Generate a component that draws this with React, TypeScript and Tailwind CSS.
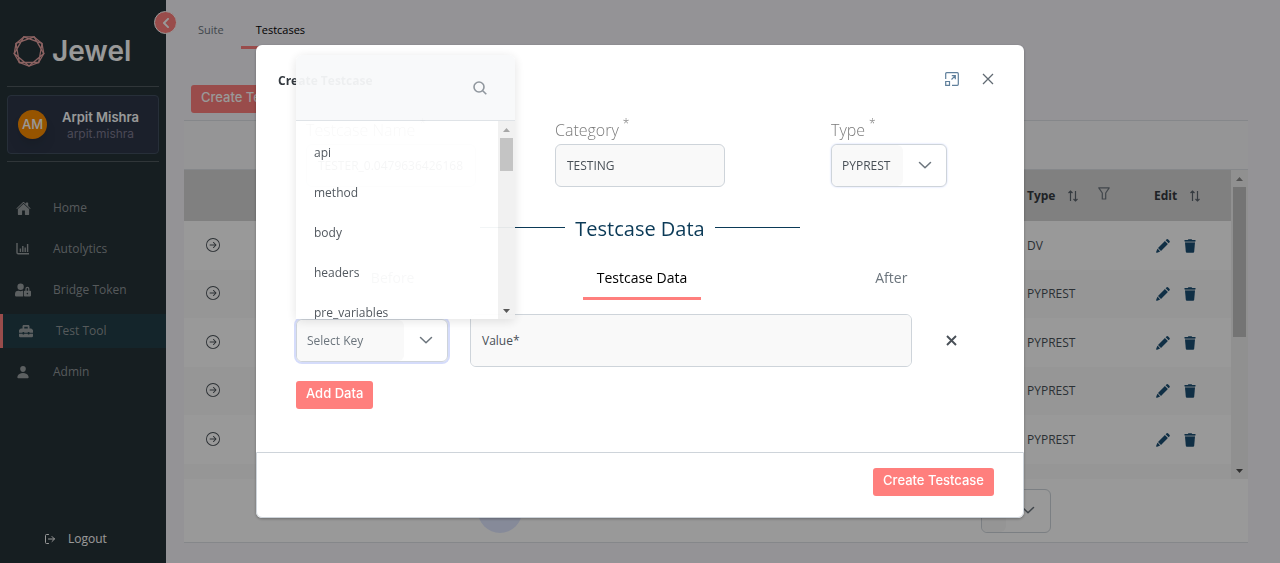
import React from "react";
import { FaUserLock, FaToolbox, FaChevronLeft } from "react-icons/fa";
import { IoPerson, IoHome } from "react-icons/io5";
import { FiLogOut } from "react-icons/fi";
import { BsArrowRightCircle } from "react-icons/bs";

const sans = "font-['Open_Sans','Noto_Sans',sans-serif]";
const round = "font-['Inter',sans-serif]";

function JewelLogo() {
  const n = 9;
  const pts = Array.from({ length: n }, (_, i) => {
    const a = ((i * 360) / n - 70) * (Math.PI / 180);
    return [16 + 15 * Math.cos(a), 16 + 15 * Math.sin(a)];
  });
  const path = (step: number) =>
    pts.map((_, i) => pts[(i * step) % n].map((v) => v.toFixed(2)).join(",")).join(" ");
  return (
    <svg viewBox="0 0 32 32" className="size-8 shrink-0" fill="none" stroke="#e8a3a2" strokeWidth="1.3" aria-hidden="true">
      <polygon points={path(1)} />
      <polygon points={path(2)} />
    </svg>
  );
}

function ChartIcon() {
  return (
    <svg viewBox="0 0 14 12" className="h-3 w-3.5" fill="none" stroke="currentColor" aria-hidden="true">
      <path d="M1 0v9.5q0 1.2 1.2 1.2H13" strokeWidth="1.4" />
      <path d="M4.4 9V5.5M6.8 9V3M9.2 9V4.5M11.6 9V1" strokeWidth="1.4" />
    </svg>
  );
}

function SortIcon() {
  return (
    <svg viewBox="0 0 12 12" className="size-3" fill="none" stroke="#5b646d" strokeWidth="1.2" aria-hidden="true">
      <path d="M3.5 11V1M1.500 3 3.5 1l2 2M8.500 1v10M6.500 9l2 2 2-2" />
    </svg>
  );
}

function FilterIcon() {
  return (
    <svg viewBox="0 0 12 13" className="h-[13px] w-3" fill="none" stroke="#6c757d" strokeWidth="1.2" aria-hidden="true">
      <path d="M.8.8h10.4L7.7 6v6H4.3V6z" strokeLinejoin="round" />
    </svg>
  );
}

function PencilIcon() {
  return (
    <svg viewBox="0 0 14 14" className="size-3.5" fill="#1c4f73" aria-hidden="true">
      <path d="M9.6 1.3 12.6 4.3 13.4 3.5a1.3 1.3 0 0 0 0-1.8L12.2.5a1.3 1.3 0 0 0-1.8 0z" />
      <path d="M8.9 2 11.9 5 5 11.9 2 8.9z" />
      <path d="M1.5 9.6.2 12.8q-.3 1.2 1 .9l3.1-1.2-.9-.6-.3-1.1-1-.2z" />
    </svg>
  );
}

function TrashIcon() {
  return (
    <svg viewBox="0 0 12 14" className="h-3.5 w-3" fill="#1c4f73" aria-hidden="true">
      <path d="M.5 1h3.3L4.4.3h3.2l.6.7h3.3v1.4H.5z" />
      <path d="M1 3.4h10l-.8 9.3q-.1 1-1.1 1H2.9q-1 0-1.1-1z" />
      <path d="M1 2.4h10v1H1z" opacity=".5" />
    </svg>
  );
}

function Chevron() {
  return (
    <svg viewBox="0 0 14 14" className="size-3.5" fill="none" stroke="#6c757d" strokeWidth="1.5" aria-hidden="true">
      <path d="M1.500 3.500 7 8.800l5.500-5.300" strokeLinecap="round" strokeLinejoin="round" />
    </svg>
  );
}

function Scrollbar({ thumb, dim }: { thumb: string; dim?: boolean }) {
  return (
    <div className="flex w-[17px] shrink-0 flex-col items-center bg-[#f1f1f1]" aria-hidden="true">
      <svg viewBox="0 0 17 17" className="size-[17px]" fill={dim ? "#8b8b8b" : "#a3a3a3"}>
        <path d="M5 11h7L8.500 7z" />
      </svg>
      <div className={`w-[13px] bg-[#c1c1c1] ${thumb}`} />
      <svg viewBox="0 0 17 17" className="mt-auto size-[17px]" fill="#505050">
        <path d="M5 7h7l-3.500 4z" />
      </svg>
    </div>
  );
}

const navItems = [
  { label: "Home", icon: <IoHome size={15} /> },
  { label: "Autolytics", icon: <ChartIcon /> },
  { label: "Bridge Token", icon: <FaUserLock size={16} /> },
  { label: "Test Tool", icon: <FaToolbox size={14} />, active: true },
  { label: "Admin", icon: <IoPerson size={14} /> },
];

function Sidebar() {
  return (
    <aside className="relative flex w-[166px] shrink-0 flex-col bg-[#263238]">
      <button
        aria-label="Collapse menu"
        className="absolute top-[11px] -right-[11px] flex size-[23px] items-center justify-center rounded-full border border-white bg-[#ff7f7d] text-white"
      >
        <FaChevronLeft size={12} />
      </button>
      <div className="flex flex-col px-[7px]">
        <div className={`flex h-[86px] items-center gap-[7px] pt-4 pl-1.5 ${round}`}>
          <JewelLogo />
          <span className="text-[28px] font-semibold text-white">Jewel</span>
        </div>
        <hr className="border-[#515b60]" />
        <div className={`mt-2 mb-[7px] flex h-[59px] items-center rounded-sm border border-[#414f60] bg-[#2d3648] pr-1 pl-2.5 ${round}`}>
          <div className="flex size-[29px] items-center justify-center rounded-full bg-[#fb8c00] text-[13px] font-medium text-white shadow-lg">
            AM
          </div>
          <div className="flex flex-1 flex-col items-center leading-[18px]">
            <span className="text-[13px] font-semibold text-white">Arpit Mishra</span>
            <span className="text-xs text-[#7d7b91]">arpit.mishra</span>
          </div>
        </div>
        <hr className="border-[#515b60]" />
      </div>
      <nav className="mt-[29px] flex flex-col gap-[7px]">
        {navItems.map((item) => (
          <a
            key={item.label}
            href="#"
            className={`flex h-[34px] items-center text-xs text-[#8f9698] ${
              item.active ? "border-l-[3px] border-[#ff7f7d] bg-[#223e48]" : ""
            }`}
          >
            <span className="ml-3.5 flex w-[18px] justify-center text-[#9aa0a2]">{item.icon}</span>
            <span className="ml-[21px]">{item.label}</span>
          </a>
        ))}
      </nav>
      <button className="mt-auto flex h-12 items-center gap-3 pl-11 text-xs text-white">
        <FiLogOut size={12} />
        Logout
      </button>
    </aside>
  );
}

const rows = ["DV", "PYPREST", "PYPREST", "PYPREST", "PYPREST", ""];

function TestcasePage() {
  return (
    <main className="flex min-w-0 flex-1 flex-col bg-[#f7f5fb] pr-8 pl-[18px]">
      <div className="flex h-[49px] text-[11px] font-medium" role="tablist">
        <button role="tab" aria-selected={false} className="px-3.5 pt-3.5 pb-0.5 text-[#6c757d]">
          Suite
        </button>
        <button role="tab" aria-selected className="ml-[3px] border-b-[3px] border-[#ff7f7d] px-[15px] pt-[15px] text-black">
          Testcases
        </button>
      </div>
      <div className="flex pt-9 pb-[7px] pl-[7px]">
        <button className={`h-7 rounded-[3px] bg-[#ff7f7d] px-2.5 pb-0.5 text-[13px] font-medium text-white ${round}`}>
          Create Testcase
        </button>
      </div>
      <section className="border-y border-[#dee2e6] bg-white">
        <div className="h-[49px] border-b border-[#dee2e6] bg-[#f8f9fa]" />
        <div className="flex h-[309px] overflow-hidden">
          <table className="w-full flex-1 table-fixed self-start text-left text-xs text-[#495057]">
            <colgroup>
              <col />
              <col className="w-[127px]" />
              <col className="w-[77px]" />
            </colgroup>
            <thead>
              <tr className="h-[51px] bg-[#d5d5d5] text-[#343a40]">
                <th aria-label="Run" />
                <th className="font-bold">
                  <span className="flex items-center">
                    Type
                    <span className="ml-3"><SortIcon /></span>
                    <span className="mb-1 ml-[19px]"><FilterIcon /></span>
                  </span>
                </th>
                <th className="font-bold">
                  <span className="flex items-center gap-3">
                    Edit <SortIcon />
                  </span>
                </th>
              </tr>
            </thead>
            <tbody>
              {rows.map((type, i) => (
                <tr key={i} className="h-12 bg-white odd:h-[49px] even:bg-[#fbfbfb]">
                  <td className="pb-0.5 pl-[22px]">
                    <button aria-label="Run testcase" className="flex"><BsArrowRightCircle size={14} /></button>
                  </td>
                  <td>{type}</td>
                  <td>
                    <span className="flex gap-3.5 pl-0.5">
                      <button aria-label="Edit testcase"><PencilIcon /></button>
                      <button aria-label="Delete testcase"><TrashIcon /></button>
                    </span>
                  </td>
                </tr>
              ))}
            </tbody>
          </table>
          <Scrollbar thumb="h-[150px]" dim />
        </div>
        <div className="flex h-[63px] items-center">
          <div className="ml-[294px] size-11 rounded-full bg-[#e0e7ff]" />
          <div className="mr-[197px] ml-auto flex h-11 w-[70px] items-center rounded-md border border-[#ced4da] bg-white">
            <span className="h-full w-6 rounded-md bg-[#f9f9f9]" />
            <span className="flex flex-1 justify-center"><Chevron /></span>
          </div>
        </div>
      </section>
    </main>
  );
}

function Label({ htmlFor, children }: { htmlFor: string; children: React.ReactNode }) {
  return (
    <label htmlFor={htmlFor} className="mb-0.5 flex h-[25px] items-center gap-1 text-base font-light text-[#7b7b7b]">
      {children}
      <span className="self-start text-xs leading-[14px]">*</span>
    </label>
  );
}

const keys = ["api", "method", "body", "headers", "pre_variables"];

function KeyPanel() {
  return (
    <div className="absolute bottom-full left-0 flex w-[219px] flex-col rounded-t-md bg-white opacity-95 shadow-[0_2px_12px_rgba(0,0,0,0.12)]">
      <div className="flex h-[66px] items-center justify-end rounded-t-md border-b border-[#dee2e6] bg-[#f8f9fa] pr-7">
        <svg viewBox="0 0 14 14" className="size-3.5" fill="none" stroke="#8b9299" strokeWidth="1.6" aria-hidden="true">
          <circle cx="6" cy="6" r="5" />
          <path d="m9.700 9.700 3.600 3.600" />
        </svg>
      </div>
      <div className="flex h-[198px] overflow-hidden">
        <ul className="flex-1 pt-3 text-xs text-[#495057]">
          {keys.map((k) => (
            <li key={k} className="flex h-10 items-center px-[18px]">{k}</li>
          ))}
        </ul>
        <Scrollbar thumb="h-[33px]" />
      </div>
    </div>
  );
}

function CreateDialog() {
  const field = "h-[43px] rounded-md border border-[#ced4da] bg-[#f9f9f9] px-[11px] text-xs text-[#495057]";
  return (
    <div className="fixed inset-0 flex items-center justify-center bg-black/40">
      <div role="dialog" aria-label="Create Testcase" className="w-3/5 rounded-md bg-white shadow-[0_1px_3px_rgba(0,0,0,0.3)]">
        <header className="flex h-[72px] items-center pl-[22px] text-xs">
          <h2 className="flex-1 font-bold text-[#343a40]">Create Testcase</h2>
          <div className="mr-[30px] flex items-center gap-[23px] pb-1">
            <button aria-label="Maximize">
              <svg viewBox="0 0 14 14" className="size-3.5" fill="none" stroke="#5f7f9b" strokeWidth="1.2" aria-hidden="true">
                <path d="M.7 7V1.700q0-1 1-1h10.600q1 0 1 1v10.600q0 1-1 1H7M6.500 7.500l3.800-3.800M6.800 3.700h3.500v3.500M.7 9.500h3.800v3.800H.7z" />
              </svg>
            </button>
            <button aria-label="Close">
              <svg viewBox="0 0 12 12" className="size-3" fill="none" stroke="#616a73" strokeWidth="1.300" aria-hidden="true">
                <path d="m1 1 10 10M11 1 1 11" />
              </svg>
            </button>
          </div>
        </header>
        <div className="grid grid-cols-[249fr_276fr_193fr] pl-[50px]">
          <div className="flex flex-col">
            <Label htmlFor="tc-name">Testcase Name</Label>
            <input id="tc-name" defaultValue="TESTER_0.0479636426168" className={`${field} w-[170px]`} />
          </div>
          <div className="flex flex-col">
            <Label htmlFor="tc-category">Category</Label>
            <input id="tc-category" defaultValue="TESTING" className={`${field} w-[170px]`} />
          </div>
          <div className="flex flex-col">
            <Label htmlFor="tc-type">Type</Label>
            <div className="flex h-[43px] w-[116px] items-center rounded-md border border-[#ced4da] shadow-[0_0_2px_#c7d2fe]">
              <select id="tc-type" className="h-full w-[71px] appearance-none rounded-md bg-[#f9f9f9] pl-2.5 text-xs text-[#495057]">
                <option>PYPREST</option>
              </select>
              <span className="flex flex-1 justify-center"><Chevron /></span>
            </div>
          </div>
        </div>
        <div className="mt-[26px] flex h-8 items-center justify-center gap-2.5 text-[#0b3a57]">
          <span className="mb-1 h-px w-[85px] bg-[#0b3a57]" />
          <h3 className="text-xl leading-8">Testcase Data</h3>
          <span className="mb-1 h-px w-[85px] bg-[#0b3a57]" />
        </div>
        <div role="tablist" className="mt-[11px] mr-2 ml-3 grid grid-cols-3 justify-items-center text-sm font-medium">
          <button role="tab" aria-selected={false} className="h-11 px-3.5 text-[#6c757d]">Before</button>
          <button role="tab" aria-selected className="h-11 border-b-[3px] border-[#ff7f7d] px-3.5 pt-[3px] text-black">Testcase Data</button>
          <button role="tab" aria-selected={false} className="h-11 px-3.5 text-[#6c757d]">After</button>
        </div>
        <div className="mt-3.5 flex items-center px-10">
          <div className="relative w-[152px]">
            <div className="flex h-[43px] items-center rounded-md border border-[#ced4da] ring-2 ring-[#d5dcfb]">
              <select aria-label="Select Key" className="h-full w-[107px] appearance-none rounded-md bg-[#f9f9f9] pl-2.5 text-xs text-[#6c757d]">
                <option>Select Key</option>
              </select>
              <span className="flex flex-1 justify-center"><Chevron /></span>
            </div>
            <KeyPanel />
          </div>
          <textarea
            aria-label="Value"
            placeholder="Value*"
            className="ml-[22px] block h-[53px] flex-1 resize-none rounded-md border border-[#ced4da] bg-[#f9f9f9] px-[11px] py-[17px] text-xs leading-[18px] placeholder:text-[#495057]"
          />
          <button aria-label="Remove row" className="mr-[27px] ml-[34px]">
            <svg viewBox="0 0 11 11" className="size-[11px]" fill="none" stroke="#495057" strokeWidth="1.900" aria-hidden="true">
              <path d="m1 1 9 9M10 1 1 10" />
            </svg>
          </button>
        </div>
        <div className={`px-10 pt-3.5 pb-[43px] ${round}`}>
          <button className="block h-7 rounded-[3px] bg-[#ff7f7d] px-2.5 pb-0.5 text-[13px] font-medium text-white">Add Data</button>
        </div>
        <footer className={`flex justify-end rounded-b-md border border-[#ced4da] px-[29px] pt-[15px] pb-[21px] ${round}`}>
          <button className="block h-7 rounded-[3px] bg-[#ff7f7d] px-2.5 pb-0.5 text-[13px] font-medium text-white">Create Testcase</button>
        </footer>
      </div>
    </div>
  );
}

export default function App() {
  return (
    <div className={`flex min-h-screen ${sans}`}>
      <Sidebar />
      <TestcasePage />
      <CreateDialog />
    </div>
  );
}
